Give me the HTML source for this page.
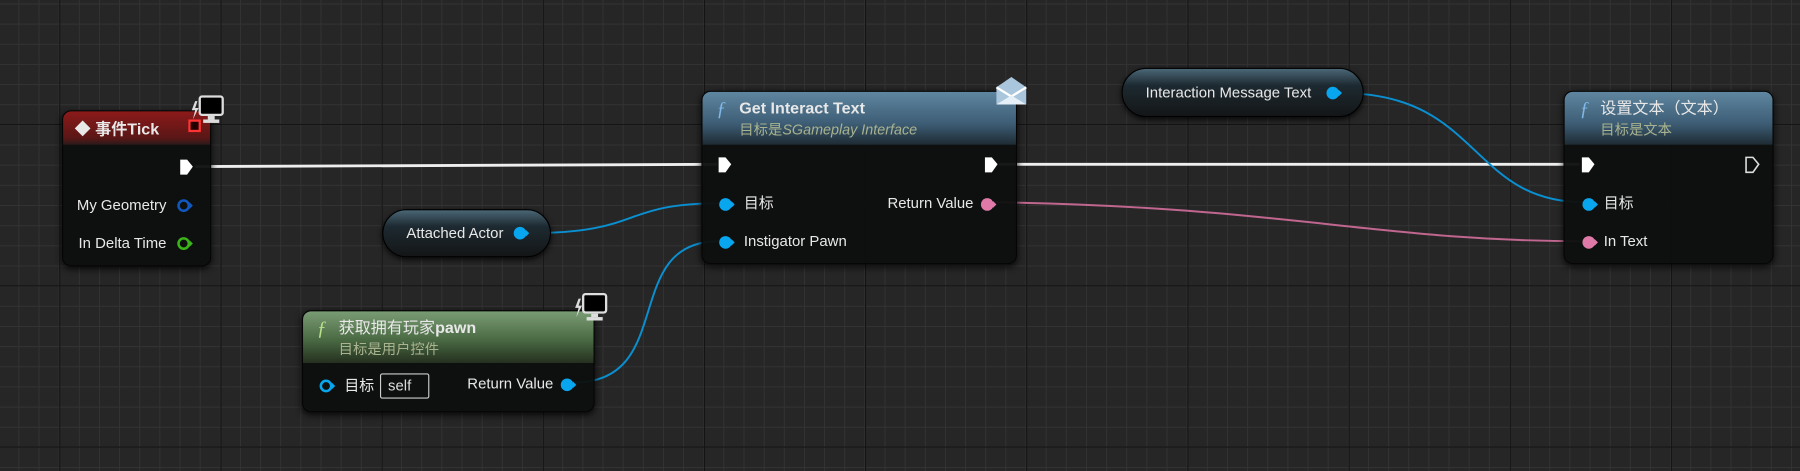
<!DOCTYPE html>
<html><head><meta charset="utf-8"><style>
*{margin:0;padding:0;box-sizing:border-box}
body{width:1800px;height:471px;overflow:hidden;position:relative;background:#262626;font-family:"Liberation Sans","Noto Sans CJK SC",sans-serif;color:#e8e8e8}
#w{position:absolute;left:0;top:0;width:1568px;height:410px;transform:scale(1.14796,1.14878);transform-origin:0 0}
.grid{position:absolute;left:0;top:0;width:1568px;height:410px;
background-image:
linear-gradient(to right,#121212 1px,transparent 1px),
linear-gradient(to bottom,#121212 1px,transparent 1px),
linear-gradient(to right,#333 1px,transparent 1px),
linear-gradient(to bottom,#333 1px,transparent 1px);
background-size:140.4px 140.4px,140.4px 140.4px,17.55px 17.55px,17.55px 17.55px;
background-position:51.6px 108px,51.6px 108px,16px 3px,16px 3px}
.node{position:absolute;background:rgba(14,16,15,.96);border-radius:8px;box-shadow:0 2px 6px rgba(0,0,0,.8);border:1px solid #050505}
.hdr{position:absolute;left:0;right:0;top:0;border-radius:7px 7px 0 0}
.t{position:absolute;font-size:13px;white-space:nowrap;line-height:16px}
.b{font-weight:bold;font-size:14px}
.sub{color:#a9b38f;font-size:12.5px}
.pill{position:absolute;border-radius:22px;background:linear-gradient(#4a6676 0%,#1d2a31 35%,#141617 100%);border:1px solid #000;box-shadow:0 2px 5px rgba(0,0,0,.8)}
svg{position:absolute;left:0;top:0}
</style></head><body><div id="w">
<div class="grid"></div>

<svg width="1568" height="410">
<g fill="none">
<path d="M170 145 L625 143" stroke="#eee" stroke-width="2.5"/>
<path d="M870 143 L1376 143" stroke="#eee" stroke-width="2.5"/>
<path d="M460 203 C560 203 540 177 626 177" stroke="#0a8fd0" stroke-width="1.7"/>
<path d="M500 333 C590 333 540 210 626 210" stroke="#0a8fd0" stroke-width="1.7"/>
<path d="M1168 81 C1290 81 1280 176 1380 176" stroke="#0a8fd0" stroke-width="1.7"/>
<path d="M866 176 C1120 180 1200 210 1380 210" stroke="#c0668f" stroke-width="1.7"/>
</g>
</svg>

<!-- Event Tick -->
<div class="node" style="left:54px;top:96px;width:130px;height:136px">
 <div class="hdr" style="height:29px;background:linear-gradient(#8c1a1a,#5a1616 80%,#2a1a1a)"></div>
 <div class="t b" style="left:10px;top:7px">◆ 事件Tick</div>
 <div style="position:absolute;left:109px;top:7px;width:11px;height:11px;border:2px solid #f33;background:#200"></div>
 <svg style="left:100px;top:41px" width="16" height="16"><path d="M2 1 H8 L13 7 L8 14 H2Z" fill="#fff"/></svg>
 <div class="t" style="right:38px;top:74px">My Geometry</div>
 <svg style="left:98px;top:75px" width="18" height="14"><circle cx="7" cy="7" r="4.5" fill="none" stroke="#1157c0" stroke-width="2.2"/><path d="M12 4 L15 7 L12 10Z" fill="#1157c0"/></svg>
 <div class="t" style="right:38px;top:107px">In Delta Time</div>
 <svg style="left:98px;top:108px" width="18" height="14"><circle cx="7" cy="7" r="4.5" fill="none" stroke="#3bb41a" stroke-width="2.2"/><path d="M12 4 L15 7 L12 10Z" fill="#3bb41a"/></svg>
</div>
<svg style="left:164px;top:82px" width="34" height="30"><path d="M6 6 L3 14 H6 L4 22 L9 12 H6 L8 6Z" fill="#ddd"/><rect x="10" y="2" width="20" height="16" rx="2" fill="#000" stroke="#ddd" stroke-width="2"/><rect x="17" y="19" width="6" height="3" fill="#ddd"/><rect x="13" y="22" width="14" height="3" fill="#ddd"/></svg>

<!-- Attached Actor -->
<div class="pill" style="left:333px;top:182px;width:147px;height:42px"></div>
<div class="t" style="left:354px;top:195px">Attached Actor</div>
<svg style="left:445px;top:195px" width="20" height="16"><circle cx="8" cy="8" r="5.5" fill="#09a6f0"/><path d="M13 5 L16 8 L13 11Z" fill="#09a6f0"/></svg>

<!-- Get Interact Text -->
<div class="node" style="left:611px;top:79px;width:275px;height:151px">
 <div class="hdr" style="height:46px;background:linear-gradient(#5f86a0,#3d5d75 60%,#1e2b33)"></div>
 <div class="t" style="left:12px;top:5px;color:#7fb8e8;font-style:italic;font-family:'Liberation Serif',serif;font-size:17px;line-height:20px">ƒ</div>
 <div class="t b" style="left:32px;top:6px">Get Interact Text</div>
 <div class="t sub" style="left:32px;top:25px">目标是<i>SGameplay Interface</i></div>
 <svg style="left:12px;top:56px" width="16" height="16"><path d="M2 1 H8 L13 7 L8 14 H2Z" fill="#fff"/></svg>
 <svg style="left:244px;top:56px" width="16" height="16"><path d="M2 1 H8 L13 7 L8 14 H2Z" fill="#fff"/></svg>
 <svg style="left:12px;top:90px" width="20" height="16"><circle cx="8" cy="8" r="5.5" fill="#09a6f0"/><path d="M13 5 L16 8 L13 11Z" fill="#09a6f0"/></svg>
 <div class="t" style="left:36px;top:89px">目标</div>
 <div class="t" style="right:37px;top:89px">Return Value</div>
 <svg style="left:240px;top:90px" width="20" height="16"><circle cx="8" cy="8" r="5.5" fill="#df7aa8"/><path d="M13 5 L16 8 L13 11Z" fill="#df7aa8"/></svg>
 <svg style="left:12px;top:123px" width="20" height="16"><circle cx="8" cy="8" r="5.5" fill="#09a6f0"/><path d="M13 5 L16 8 L13 11Z" fill="#09a6f0"/></svg>
 <div class="t" style="left:36px;top:122px">Instigator Pawn</div>
</div>
<svg style="left:866px;top:65px" width="32" height="30"><path d="M2 11 L15 2 L28 11 V26 H2Z" fill="#a9c6dc"/><path d="M2 11 L15 19 L28 11" fill="none" stroke="#fff" stroke-width="2"/><path d="M2 26 L15 18 L28 26" fill="#e6f0f8"/></svg>

<!-- Interaction Message Text -->
<div class="pill" style="left:977px;top:59px;width:211px;height:43px"></div>
<div class="t" style="left:998px;top:73px">Interaction Message Text</div>
<svg style="left:1153px;top:73px" width="20" height="16"><circle cx="8" cy="8" r="5.5" fill="#09a6f0"/><path d="M13 5 L16 8 L13 11Z" fill="#09a6f0"/></svg>

<!-- Set Text -->
<div class="node" style="left:1362px;top:79px;width:183px;height:151px">
 <div class="hdr" style="height:46px;background:linear-gradient(#5f86a0,#3d5d75 60%,#1e2b33)"></div>
 <div class="t" style="left:13px;top:5px;color:#7fb8e8;font-style:italic;font-family:'Liberation Serif',serif;font-size:17px;line-height:20px">ƒ</div>
 <div class="t" style="left:31px;top:6px;font-size:14px">设置文本（文本）</div>
 <div class="t sub" style="left:31px;top:25px">目标是文本</div>
 <svg style="left:13px;top:56px" width="16" height="16"><path d="M2 1 H8 L13 7 L8 14 H2Z" fill="#fff"/></svg>
 <svg style="left:156px;top:56px" width="16" height="16"><path d="M2 1 H8 L13 7 L8 14 H2Z" fill="none" stroke="#ddd" stroke-width="1.4"/></svg>
 <svg style="left:13px;top:90px" width="20" height="16"><circle cx="8" cy="8" r="5.5" fill="#09a6f0"/><path d="M13 5 L16 8 L13 11Z" fill="#09a6f0"/></svg>
 <div class="t" style="left:34px;top:89px">目标</div>
 <svg style="left:13px;top:123px" width="20" height="16"><circle cx="8" cy="8" r="5.5" fill="#df7aa8"/><path d="M13 5 L16 8 L13 11Z" fill="#df7aa8"/></svg>
 <div class="t" style="left:34px;top:122px">In Text</div>
</div>

<!-- Get owning pawn -->
<div class="node" style="left:263px;top:270px;width:255px;height:89px">
 <div class="hdr" style="height:45px;background:linear-gradient(#7a9c74,#4a6a44 55%,#25301f)"></div>
 <div class="t" style="left:12px;top:5px;color:#b8e08a;font-style:italic;font-family:'Liberation Serif',serif;font-size:17px;line-height:20px">ƒ</div>
 <div class="t" style="left:31px;top:6px;font-size:14px">获取拥有玩家<b>pawn</b></div>
 <div class="t sub" style="left:31px;top:25px">目标是用户控件</div>
 <svg style="left:13px;top:57px" width="20" height="16"><circle cx="7" cy="8" r="4.5" fill="none" stroke="#09a6f0" stroke-width="2.2"/><path d="M12 5 L15 8 L12 11Z" fill="#09a6f0"/></svg>
 <div class="t" style="left:36px;top:57px">目标</div>
 <div style="position:absolute;left:67px;top:54px;width:43px;height:22px;border:1px solid #ccc;border-radius:2px;font-size:13px;line-height:20px;padding-left:6px;color:#ddd">self</div>
 <div class="t" style="right:35px;top:55px">Return Value</div>
 <svg style="left:222px;top:56px" width="20" height="16"><circle cx="8" cy="8" r="5.5" fill="#09a6f0"/><path d="M13 5 L16 8 L13 11Z" fill="#09a6f0"/></svg>
</div>
<svg style="left:498px;top:254px" width="34" height="30"><path d="M6 6 L3 14 H6 L4 22 L9 12 H6 L8 6Z" fill="#ddd"/><rect x="10" y="2" width="20" height="16" rx="2" fill="#000" stroke="#ddd" stroke-width="2"/><rect x="17" y="19" width="6" height="3" fill="#ddd"/><rect x="13" y="22" width="14" height="3" fill="#ddd"/></svg>
</div></body></html>
